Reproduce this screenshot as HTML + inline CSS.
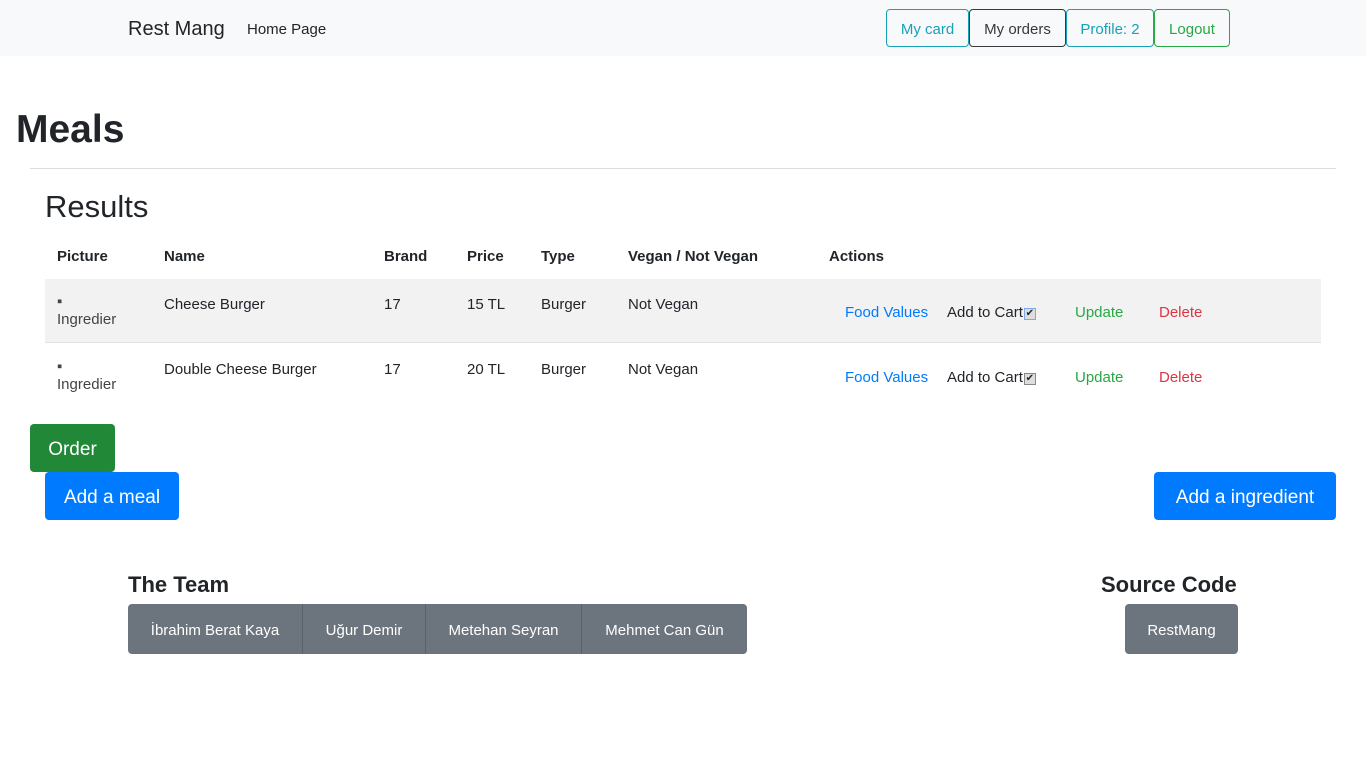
<!DOCTYPE html>
<html><head><meta charset="utf-8"><style>
*{box-sizing:border-box;margin:0;padding:0}
body{width:1366px;height:768px;background:#fff;font-family:"Liberation Sans",sans-serif;color:#212529;position:relative;overflow:hidden}
.a{position:absolute;white-space:nowrap}
.nav{position:absolute;left:0;top:0;width:1366px;height:56px;background:#f8f9fa}
.ob{position:absolute;top:9px;height:38px;border:1px solid;border-radius:4px;font-size:15px;display:flex;align-items:center;justify-content:center;padding-top:2px}
.th{font-weight:bold;font-size:15px;top:248px}
.td{font-size:15px}
.btn{position:absolute;color:#fff;border-radius:4px;font-size:19px;display:flex;align-items:center;justify-content:center;padding-top:3px}
.grp{position:absolute;top:604px;height:50px;background:#6c757d;color:#fff;font-size:15px;display:flex;border-radius:4px}
.grp div{display:flex;align-items:center;justify-content:center;border-right:1px solid #5a6268;padding-top:2px}
.grp div:last-child{border-right:none}
.cb{display:inline-block;width:12px;height:12px;border:1px solid #888;background:#ddd;vertical-align:1px;font-size:10px;line-height:10px;text-align:center;margin-left:1px}
</style></head><body>
<div class="nav"></div>
<div class="a" style="left:128px;top:18px;font-size:20px">Rest Mang</div>
<div class="a" style="left:247px;top:21px;font-size:15px">Home Page</div>
<div class="ob" style="left:886px;width:83px;border-color:#17a2b8;color:#17a2b8">My card</div>
<div class="ob" style="left:969px;width:97px;border-color:#343a40;color:#343a40">My orders</div>
<div class="ob" style="left:1066px;width:88px;border-color:#17a2b8;color:#17a2b8">Profile: 2</div>
<div class="ob" style="left:1154px;width:76px;border-color:#28a745;color:#28a745">Logout</div>

<div class="a" style="left:16px;top:108px;font-size:39px;font-weight:bold">Meals</div>
<div class="a" style="left:30px;top:168px;width:1306px;height:1px;background:#ddd"></div>
<div class="a" style="left:45px;top:189px;font-size:31px">Results</div>

<div class="a th" style="left:57px">Picture</div>
<div class="a th" style="left:164px">Name</div>
<div class="a th" style="left:384px">Brand</div>
<div class="a th" style="left:467px">Price</div>
<div class="a th" style="left:541px">Type</div>
<div class="a th" style="left:628px">Vegan / Not Vegan</div>
<div class="a th" style="left:829px">Actions</div>

<div class="a" style="left:45px;top:279px;width:1276px;height:64px;background:#f2f2f2;border-bottom:1px solid #dee2e6"></div>

<div class="a td" style="left:57px;top:293px;color:#444;line-height:18px;width:70px;overflow:hidden">▪<br>Ingredier</div>
<div class="a td" style="left:164px;top:296px">Cheese Burger</div>
<div class="a td" style="left:384px;top:296px">17</div>
<div class="a td" style="left:467px;top:296px">15 TL</div>
<div class="a td" style="left:541px;top:296px">Burger</div>
<div class="a td" style="left:628px;top:296px">Not Vegan</div>
<div class="a td" style="left:845px;top:304px;color:#007bff">Food Values</div>
<div class="a td" style="left:947px;top:304px">Add to Cart<span class="cb" style="border-color:#7fa8e8">✔</span></div>
<div class="a td" style="left:1075px;top:304px;color:#28a745">Update</div>
<div class="a td" style="left:1159px;top:304px;color:#dc3545">Delete</div>

<div class="a td" style="left:57px;top:358px;color:#444;line-height:18px;width:70px;overflow:hidden">▪<br>Ingredier</div>
<div class="a td" style="left:164px;top:361px">Double Cheese Burger</div>
<div class="a td" style="left:384px;top:361px">17</div>
<div class="a td" style="left:467px;top:361px">20 TL</div>
<div class="a td" style="left:541px;top:361px">Burger</div>
<div class="a td" style="left:628px;top:361px">Not Vegan</div>
<div class="a td" style="left:845px;top:369px;color:#007bff">Food Values</div>
<div class="a td" style="left:947px;top:369px">Add to Cart<span class="cb">✔</span></div>
<div class="a td" style="left:1075px;top:369px;color:#28a745">Update</div>
<div class="a td" style="left:1159px;top:369px;color:#dc3545">Delete</div>

<div class="btn" style="left:30px;top:424px;width:85px;height:48px;background:#218838">Order</div>
<div class="btn" style="left:45px;top:472px;width:134px;height:48px;background:#007bff">Add a meal</div>
<div class="btn" style="left:1154px;top:472px;width:182px;height:48px;background:#007bff">Add a ingredient</div>

<div class="a" style="left:128px;top:572px;font-size:22px;font-weight:bold">The Team</div>
<div class="grp" style="left:128px;width:619px">
<div style="width:175px">İbrahim Berat Kaya</div><div style="width:123px">Uğur Demir</div><div style="width:156px">Metehan Seyran</div><div style="width:165px">Mehmet Can Gün</div>
</div>
<div class="a" style="left:1101px;top:572px;font-size:22px;font-weight:bold">Source Code</div>
<div class="grp" style="left:1125px;width:113px"><div style="width:113px">RestMang</div></div>
</body></html>
